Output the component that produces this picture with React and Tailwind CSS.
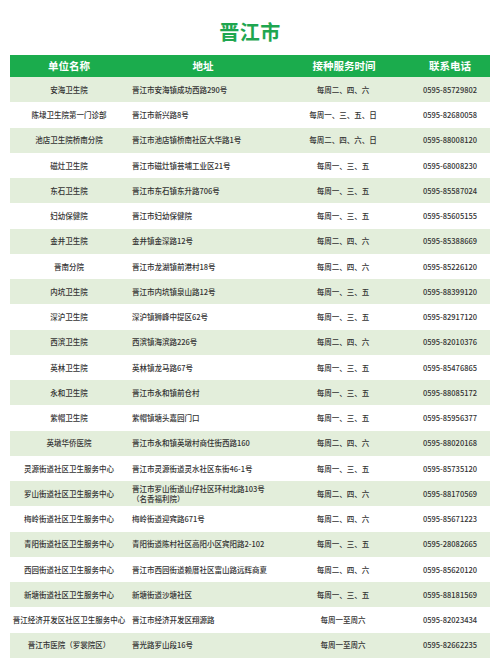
const rows = [
  ["安海卫生院", "晋江市安海镇成功西路290号", "每周二、四、六", "0595-85729802"],
  ["陈埭卫生院第一门诊部", "晋江市新兴路8号", "每周一、三、五、日", "0595-82680058"],
  ["池店卫生院桥南分院", "晋江市池店镇桥南社区大华路1号", "每周二、四、六、日", "0595-88008120"],
  ["磁灶卫生院", "晋江市磁灶镇芸埔工业区21号", "每周一、三、五", "0595-68008230"],
  ["东石卫生院", "晋江市东石镇东升路706号", "每周一、三、五", "0595-85587024"],
  ["妇幼保健院", "晋江市妇幼保健院", "每周一、三、五", "0595-85605155"],
  ["金井卫生院", "金井镇金深路12号", "每周二、四、六", "0595-85388669"],
  ["晋南分院", "晋江市龙湖镇前港村18号", "每周二、四、六", "0595-85226120"],
  ["内坑卫生院", "晋江市内坑镇泉山路12号", "每周一、三、五", "0595-88399120"],
  ["深沪卫生院", "深沪镇狮峰中提区62号", "每周一、三、五", "0595-82917120"],
  ["西滨卫生院", "西滨镇海滨路226号", "每周二、四、六", "0595-82010376"],
  ["英林卫生院", "英林镇龙马路67号", "每周一、三、五", "0595-85476865"],
  ["永和卫生院", "晋江市永和镇前仓村", "每周一、三、五", "0595-88085172"],
  ["紫帽卫生院", "紫帽镇塘头嘉园门口", "每周一、三、五", "0595-85956377"],
  ["英墩华侨医院", "晋江市永和镇英墩村商住街西路160", "每周二、四、六", "0595-88020168"],
  ["灵源街道社区卫生服务中心", "晋江市灵源街道灵水社区东街46-1号", "每周一、三、五", "0595-85735120"],
  ["罗山街道社区卫生服务中心", ["晋江市罗山街道山仔社区环村北路103号", "（名香福利院）"], "每周二、四、六", "0595-88170569"],
  ["梅岭街道社区卫生服务中心", "梅岭街道迎宾路671号", "每周二、四、六", "0595-85671223"],
  ["青阳街道社区卫生服务中心", "青阳街道陈村社区高阳小区宾阳路2-102", "每周一、三、五", "0595-28082665"],
  ["西园街道社区卫生服务中心", "晋江市西园街道赖厝社区富山路远辉商夏", "每周二、四、六", "0595-85620120"],
  ["新塘街道社区卫生服务中心", "新塘街道沙塘社区", "每周一、三、五", "0595-88181569"],
  ["晋江经济开发区社区卫生服务中心", "晋江市经济开发区翔源路", "每周一至周六", "0595-82023434"],
  ["晋江市医院（罗裳院区）", "晋光路罗山段16号", "每周一至周六", "0595-82662235"],
];

// fixed column widths so the header and every row line up
const cols = "grid grid-cols-[118px_150px_132px_80px]";

const App = () => {
  return (
    <div
      className="w-[500px] h-[670px] bg-white overflow-hidden"
      style={{ fontFamily: '"Noto Sans CJK SC", "Noto Sans", sans-serif' }}
    >
      <h1 className="pt-[18px] h-[55px] text-center text-[20px] leading-[28px] font-bold text-[#1ea650] tracking-[0.5px]">
        晋江市
      </h1>
      <div className="mx-[10px]">
        <div className={`${cols} h-[22px] items-center bg-[#1bac4d] text-white text-[10.5px] font-bold`}>
          <div className="text-center">单位名称</div>
          <div className="text-center">地址</div>
          <div className="text-center">接种服务时间</div>
          <div className="text-center">联系电话</div>
        </div>
        {rows.map((row, i) => (
          <div
            key={i}
            className={`${cols} h-[25.26px] items-center text-[7.5px] leading-[9.5px] font-medium text-[#333333] ${i % 2 === 0 ? "bg-[#e3eedb]" : "bg-white"}`}
          >
            <div className="text-center whitespace-nowrap">{row[0]}</div>
            <div className="pl-[4px] whitespace-nowrap">
              {Array.isArray(row[1]) ? (
                <>
                  {row[1][0]}
                  <br />
                  {row[1][1]}
                </>
              ) : (
                row[1]
              )}
            </div>
            <div className="text-center pr-[2px]">{row[2]}</div>
            <div className="text-center">{row[3]}</div>
          </div>
        ))}
      </div>
    </div>
  );
};

export default App;
